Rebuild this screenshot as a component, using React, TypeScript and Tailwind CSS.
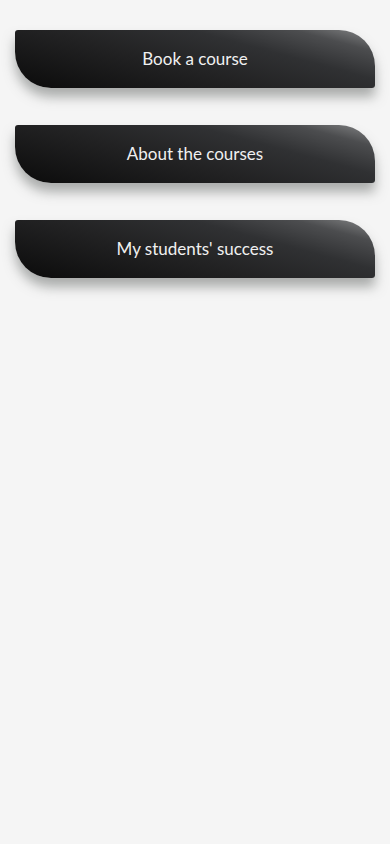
import React from 'react';

const links = ['Book a course', 'About the courses', "My students' success"];

export default function App() {
  return (
    <div className="min-h-[844px] w-full bg-[#f5f5f5] px-[15px] pt-[30px] font-['Lato','Open_Sans',sans-serif]">
      <div className="flex flex-col gap-[37px]">
        {links.map((label) => (
          <button
            key={label}
            type="button"
            className="flex h-[58px] w-full items-center justify-center rounded-tl-[3px] rounded-tr-[36px] rounded-br-[3px] rounded-bl-[36px] bg-[linear-gradient(195deg,#868788_0%,#4c4d4f_14%,#303133_32%,#222223_58%,#0b0b0b_100%)] text-[17px] text-[#f0f0f0] shadow-[0_9px_12px_rgba(95,100,97,0.5)]"
          >
            {label}
          </button>
        ))}
      </div>
    </div>
  );
}
